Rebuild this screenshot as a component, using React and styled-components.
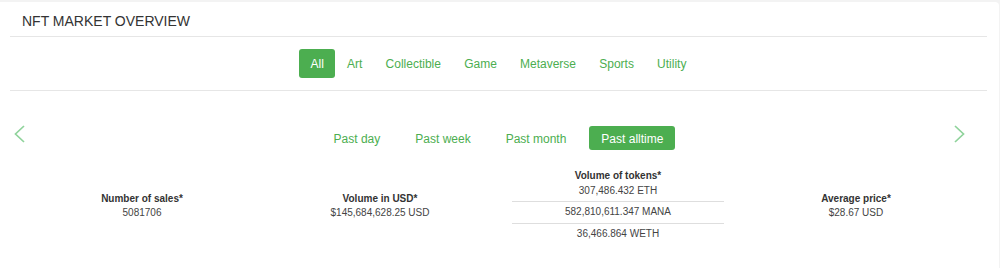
import React, { useState } from "react";
import styled, { createGlobalStyle } from "styled-components";

const GREEN = "#4cae50";

const Global = createGlobalStyle`
  html, body { margin: 0; padding: 0; background: #f3f3f3; }
  body { font-family: "Liberation Sans", Arial, sans-serif; }
`;

const Card = styled.div`
  margin: 2px 1px 0 0;
  min-height: 266px;
  background: #fff;
  border-top-right-radius: 4px;
  padding: 0 12px 0 10px;
  box-sizing: border-box;
`;

const Header = styled.div`
  padding: 9px 12px 5px;
`;

const Title = styled.h2`
  margin: 0;
  font-size: 14px;
  line-height: 20px;
  font-weight: normal;
  color: #333;
`;

const Divider = styled.div`
  height: 1px;
  background: #e6e6e6;
`;

const Tabs = styled.nav`
  display: flex;
  justify-content: center;
  padding: 12px 0;
`;

const Pill = styled.button`
  border: 0;
  background: ${(p) => (p.$active ? GREEN : "transparent")};
  color: ${(p) => (p.$active ? "#fff" : GREEN)};
  font-family: inherit;
  font-size: 12px;
  height: ${(p) => p.$h}px;
  line-height: ${(p) => p.$h}px;
  padding: 1px ${(p) => p.$px}px 0;
  border-radius: 3px;
  cursor: pointer;
`;

const Carousel = styled.div`
  position: relative;
  padding-top: 35px;
`;

const Arrow = styled.button`
  position: absolute;
  top: 34px;
  ${(p) => (p.$side === "left" ? "left: 4px;" : "right: 22px;")}
  width: 11px;
  height: 18px;
  padding: 0;
  border: 0;
  background: transparent;
  display: flex;
  cursor: pointer;
`;

const Periods = styled.div`
  display: flex;
  justify-content: center;
  gap: 11px;
`;

const Stats = styled.div`
  display: grid;
  grid-template-columns: repeat(4, 238px);
  justify-content: center;
  align-items: center;
  margin-top: 19px;
  padding-left: 1px;
`;

const Stat = styled.div`
  padding: 0 13px;
  text-align: center;
  font-size: 10px;
  line-height: 14px;
  margin-top: ${(p) => (p.$lift ? "-2px" : "0")};
`;

const Label = styled.div`
  font-weight: bold;
  color: #333;
`;

const Value = styled.div`
  color: #444;
`;

const TokenList = styled.ul`
  list-style: none;
  margin: 0;
  padding: 0;
`;

const TokenItem = styled.li`
  color: #444;
  padding: 3px 0 4px;
  border-top: 1px solid #dedede;
  &:first-child {
    padding-top: 1px;
    padding-bottom: 3px;
    border-top: 0;
  }
`;

const Chevron = ({ dir }) => (
  <svg width="11" height="18" viewBox="0 0 11 18" fill="none">
    <polyline
      points={dir === "left" ? "10,1 1.5,9 10,17" : "1,1 9.5,9 1,17"}
      stroke="#8fd39b"
      strokeWidth="1.7"
    />
  </svg>
);

const categories = ["All", "Art", "Collectible", "Game", "Metaverse", "Sports", "Utility"];
const periods = ["Past day", "Past week", "Past month", "Past alltime"];

export default function App() {
  const [cat, setCat] = useState("All");
  const [period, setPeriod] = useState("Past alltime");
  return (
    <>
      <Global />
      <Card>
        <Header>
          <Title>NFT MARKET OVERVIEW</Title>
        </Header>
        <Divider />
        <Tabs>
          {categories.map((c) => (
            <Pill key={c} $h={29} $px={11.6} $active={c === cat} onClick={() => setCat(c)}>
              {c}
            </Pill>
          ))}
        </Tabs>
        <Divider />
        <Carousel>
          <Arrow $side="left" aria-label="Previous">
            <Chevron dir="left" />
          </Arrow>
          <Arrow $side="right" aria-label="Next">
            <Chevron dir="right" />
          </Arrow>
          <Periods>
            {periods.map((p) => (
              <Pill key={p} $h={24} $px={12} $active={p === period} onClick={() => setPeriod(p)}>
                {p}
              </Pill>
            ))}
          </Periods>
          <Stats>
            <Stat $lift>
              <Label>Number of sales*</Label>
              <Value>5081706</Value>
            </Stat>
            <Stat $lift>
              <Label>Volume in USD*</Label>
              <Value>$145,684,628.25 USD</Value>
            </Stat>
            <Stat>
              <Label>Volume of tokens*</Label>
              <TokenList>
                <TokenItem>307,486.432 ETH</TokenItem>
                <TokenItem>582,810,611.347 MANA</TokenItem>
                <TokenItem>36,466.864 WETH</TokenItem>
              </TokenList>
            </Stat>
            <Stat $lift>
              <Label>Average price*</Label>
              <Value>$28.67 USD</Value>
            </Stat>
          </Stats>
        </Carousel>
      </Card>
    </>
  );
}
